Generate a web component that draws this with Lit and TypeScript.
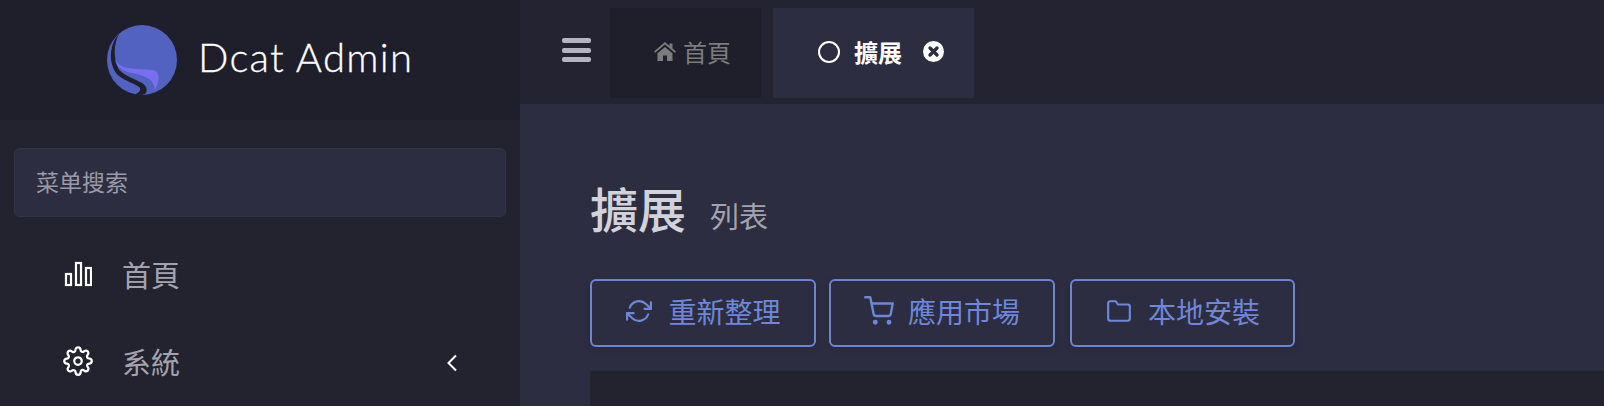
import { LitElement, html, css } from "lit";
import { customElement } from "lit/decorators.js";

@customElement("app-root")
export class AppRoot extends LitElement {
  static styles = css`
    :host { display: block; width: 1604px; height: 406px; overflow: hidden; font-family: "Noto Sans CJK TC", sans-serif; background: #2c2d40; }
    .page { display: flex; width: 1604px; height: 406px; overflow: hidden; }
    .side { width: 520px; height: 406px; overflow: hidden; flex: none; background: #23232f; display: flex; flex-direction: column; }
    .brand { height: 120px; flex: none; background: #1f1f2b; display: flex; align-items: center; padding-left: 107px; gap: 21px; box-sizing: border-box; }
    .brand svg { flex: none; }
    .brand span { font-family: "Lato", sans-serif; font-weight: 300; font-size: 40px; letter-spacing: 1.3px; color: #fff; line-height: 40px; padding-bottom: 7px; -webkit-text-stroke: 0.3px #fff; }
    .search { flex: none; margin: 28px 14px 0; height: 69px; box-sizing: border-box; background: #2c2d40; border: 1px solid #33344a; border-radius: 6px; display: flex; align-items: center; padding: 0 0 3px 21px; color: #9a9aa8; font-size: 23px; }
    .nav { flex: none; display: flex; flex-direction: column; padding: 13px 0 0 62px; }
    .item { flex: none; display: flex; align-items: center; height: 87px; color: #a3a3af; font-size: 29px; }
    .item .ic { width: 32px; height: 32px; margin-right: 28px; color: #fff; display: flex; align-items: center; justify-content: center; }
    .item .chev { margin: 4px 0 0 266px; color: #fff; display: flex; }
    .main { flex: 1; display: flex; flex-direction: column; min-width: 0; }
    .top { height: 104px; flex: none; background: #232331; display: flex; align-items: flex-start; padding-left: 42px; box-sizing: border-box; }
    .burger { width: 29px; height: 24px; margin-top: 38px; margin-right: 19px; display: flex; flex-direction: column; justify-content: space-between; }
    .burger i { display: block; height: 5px; border-radius: 2px; background: #b4b4c3; }
    .tab { height: 90px; margin-top: 8px; display: flex; align-items: center; box-sizing: border-box; padding-bottom: 3px; }
    .tab.home { width: 151px; background: #1f1f2b; color: #7c7c7c; font-size: 24px; padding-left: 44px; gap: 7px; margin-right: 12px; }
    .tab.on { width: 201px; background: #2c2d40; color: #fff; font-size: 24px; font-weight: 700; padding-left: 45px; }
    .ring { width: 22px; height: 22px; border: 2px solid #fff; border-radius: 50%; box-sizing: border-box; margin-right: 14px; }
    .x { margin-left: 21px; display: flex; }
    .content { flex: 1; padding: 78px 0 0 70px; min-width: 0; }
    .title { display: flex; align-items: baseline; gap: 24px; height: 50px; }
    .title h1 { margin: 0; font-size: 48px; font-weight: 500; line-height: 50px; color: #d2d2da; }
    .title small { font-size: 29px; color: #a3a3af; }
    .btns { display: flex; gap: 13px; margin-top: 47px; }
    .btn { height: 68px; box-sizing: border-box; border: 2px solid #6b84d8; border-radius: 6px; color: #6f87d9; font-size: 28px; display: flex; align-items: center; justify-content: center; gap: 15px; padding-bottom: 4px; box-shadow: 0 2px 6px rgba(0,0,0,.12); }
    .b1 { width: 226px; }
    .b2 { width: 226px; gap: 14px; }
    .b3 { width: 225px; margin-left: 2px; }
    .table { height: 60px; margin-top: 24px; background: #23232f; }
  `;

  render() {
    return html`<div class="page">
      <aside class="side">
        <div class="brand">
          <svg width="70" height="70" viewBox="0 0 70 70">
            <circle cx="35" cy="35" r="35" fill="#5162c1"/>
            <path d="M12 9C7 18 6 32 11 43C15 50 26 53 35 58C40 61 41 66 38 69C34 70.5 30 70 27 70C31 68 34 66 33 63C30 59 18 56 12 51C5 45 2 33 5 22C6 17 9 12 12 9Z" fill="#1f1f2b"/>
            <path d="M7.7 33.7C13 46 30 43 46 45C52 46 54 54 48 65C47 56 42 52 29 49C20 47 10 45 7.7 33.7Z" fill="#786ff0"/>
          </svg>
          <span>Dcat Admin</span>
        </div>
        <div class="search">菜单搜索</div>
        <nav class="nav">
          <div class="item"><span class="ic"><svg width="28" height="26" viewBox="0 0 28 26" fill="none" stroke="currentColor" stroke-width="2.2"><rect x="2" y="13" width="5" height="11"/><rect x="12" y="2" width="5" height="22"/><rect x="22" y="7" width="5" height="17"/></svg></span>首頁</div>
          <div class="item"><span class="ic"><svg width="30" height="30" viewBox="0 0 24 24" fill="none" stroke="currentColor" stroke-width="1.8" stroke-linecap="round" stroke-linejoin="round"><circle cx="12" cy="12" r="3"/><path d="M19.4 15a1.65 1.65 0 0 0 .33 1.82l.06.06a2 2 0 0 1 0 2.83 2 2 0 0 1-2.83 0l-.06-.06a1.65 1.65 0 0 0-1.82-.33 1.65 1.65 0 0 0-1 1.51V21a2 2 0 0 1-2 2 2 2 0 0 1-2-2v-.09A1.65 1.65 0 0 0 9 19.4a1.65 1.65 0 0 0-1.82.33l-.06.06a2 2 0 0 1-2.83 0 2 2 0 0 1 0-2.83l.06-.06a1.65 1.65 0 0 0 .33-1.82 1.65 1.65 0 0 0-1.51-1H3a2 2 0 0 1-2-2 2 2 0 0 1 2-2h.09A1.65 1.65 0 0 0 4.6 9a1.65 1.65 0 0 0-.33-1.82l-.06-.06a2 2 0 0 1 0-2.83 2 2 0 0 1 2.83 0l.06.06a1.65 1.65 0 0 0 1.82.33H9a1.65 1.65 0 0 0 1-1.51V3a2 2 0 0 1 2-2 2 2 0 0 1 2 2v.09a1.65 1.65 0 0 0 1 1.51 1.65 1.65 0 0 0 1.82-.33l.06-.06a2 2 0 0 1 2.83 0 2 2 0 0 1 0 2.83l-.06.06a1.65 1.65 0 0 0-.33 1.82V9a1.65 1.65 0 0 0 1.51 1H21a2 2 0 0 1 2 2 2 2 0 0 1-2 2h-.09a1.65 1.65 0 0 0-1.51 1z"/></svg></span>系統<span class="chev"><svg width="12" height="18" viewBox="0 0 12 18" fill="none" stroke="currentColor" stroke-width="2"><path d="M10 1.5 2.5 9l7.5 7.5"/></svg></span></div>
        </nav>
      </aside>
      <div class="main">
        <header class="top">
          <div class="burger"><i></i><i></i><i></i></div>
          <div class="tab home"><svg width="22" height="19" viewBox="0 0 22 19" fill="currentColor"><path d="M11 0 0 9.5l1.2 1.3L11 2.6l9.8 8.2L22 9.5 18.5 6.5V1.5h-3v2.6zM3.5 11.3V19h5.5v-5.5h4V19h5.5v-7.7L11 5z"/></svg>首頁</div>
          <div class="tab on"><span class="ring"></span>擴展<span class="x"><svg width="21" height="21" viewBox="0 0 21 21"><circle cx="10.5" cy="10.5" r="10.5" fill="#fff"/><path d="M7 7l7 7M14 7l-7 7" stroke="#2c2d40" stroke-width="3.4" stroke-linecap="round"/></svg></span></div>
        </header>
        <section class="content">
          <div class="title"><h1>擴展</h1><small>列表</small></div>
          <div class="btns">
            <div class="btn b1"><svg width="28" height="26" viewBox="0 0 24 24" fill="none" stroke="currentColor" stroke-width="2" stroke-linecap="round" stroke-linejoin="round"><path d="M23 4v6h-6M1 20v-6h6"/><path d="M3.5 9a9 9 0 0 1 14.9-3.4L23 10M1 14l4.6 4.4A9 9 0 0 0 20.5 15"/></svg>重新整理</div>
            <div class="btn b2"><svg width="30" height="30" viewBox="0 0 24 24" fill="none" stroke="currentColor" stroke-width="1.9" stroke-linecap="round" stroke-linejoin="round"><circle cx="9" cy="21" r="1"/><circle cx="20" cy="21" r="1"/><path d="M1 1h4l2.7 13.4a2 2 0 0 0 2 1.6h9.7a2 2 0 0 0 2-1.6L23 6H6"/></svg>應用市場</div>
            <div class="btn b3"><svg width="28" height="26" viewBox="0 0 24 24" fill="none" stroke="currentColor" stroke-width="2" stroke-linecap="round" stroke-linejoin="round"><path d="M22 19a2 2 0 0 1-2 2H4a2 2 0 0 1-2-2V5a2 2 0 0 1 2-2h5l2 3h9a2 2 0 0 1 2 2z"/></svg>本地安裝</div>
          </div>
          <div class="table"></div>
        </section>
      </div>
    </div>`;
  }
}
